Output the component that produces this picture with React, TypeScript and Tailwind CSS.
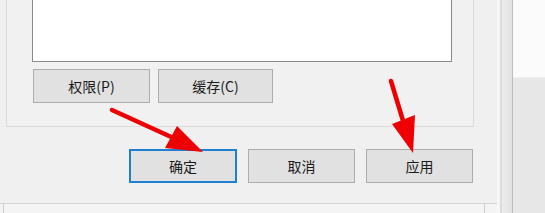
import React from "react";

const font = { fontFamily: '"Noto Sans CJK SC", "Noto Sans", sans-serif' };

function Btn({ label, w, primary }: { label: string; w: string; primary?: boolean }) {
  return (
    <div
      className={`${w} h-[34px] flex items-center justify-center bg-[#e1e1e1] text-[14px] text-[#1a1a1a] ${
        primary ? "border-2 border-[#1f7fd0]" : "border border-[#adadad]"
      }`}
    >
      {label}
    </div>
  );
}

export default function App() {
  return (
    <div className="relative w-[545px] h-[213px] overflow-hidden flex bg-[#f0f0f0]" style={font}>
      {/* left: dialog + what is below */}
      <div className="w-[497px] flex flex-col">
        <div className="h-[203px] bg-[#f0f0f0] flex flex-col pl-[6px] pr-[23px]">
          {/* group / tab page */}
          <div className="h-[127px] border-l border-r border-b border-[#dadada] bg-[#f1f1f1] flex flex-col pl-[25px] pr-[21px]">
            <div className="h-[62px] bg-white border-l border-r border-b border-[#8a8a8a]" />
            <div className="flex gap-[8px] mt-[7px] pl-[1px]">
              <Btn label="权限(P)" w="w-[117px]" />
              <Btn label="缓存(C)" w="w-[115px]" />
            </div>
          </div>
          <div className="flex justify-end gap-[11px] mt-[22px] pr-[1px]">
            <Btn label="确定" w="w-[108px]" primary />
            <Btn label="取消" w="w-[107px]" />
            <Btn label="应用" w="w-[107px]" />
          </div>
        </div>
        <div className="flex-1 bg-[#f4f4f4] border-t border-[#d4d4d4] flex">
          <div className="w-[3px]" />
          <div className="w-[482px] border-l border-r border-[#cfcfcf]" />
        </div>
      </div>
      {/* right strip / shadow */}
      <div className="w-[16px] flex">
        <div className="w-[3px] bg-[#f6f6f6]" />
        <div className="w-[2px] bg-[#dcdcdc]" />
        <div className="flex-1 bg-gradient-to-r from-[#ececec] to-[#e2e2e2]" />
        <div className="w-[1px] bg-[#bdbdbd]" />
      </div>
      <div className="flex-1 flex flex-col">
        <div className="h-[78px] bg-[#fbfbfb] border-b border-[#f0f0f0]" />
        <div className="flex-1 bg-[#e7e7e7]" />
      </div>

      {/* red annotation arrows */}
      <svg className="absolute left-0 top-0" width="545" height="213" viewBox="0 0 545 213">
        <line x1="112" y1="110" x2="180" y2="141" stroke="#ee0000" strokeWidth="4.5" strokeLinecap="round" />
        <polygon points="165,148 177,126 203,152" fill="#ee0000" />
        <line x1="391" y1="81" x2="404" y2="124" stroke="#ee0000" strokeWidth="4.5" strokeLinecap="round" />
        <polygon points="392,124 415,115 413,153" fill="#ee0000" />
      </svg>
    </div>
  );
}
